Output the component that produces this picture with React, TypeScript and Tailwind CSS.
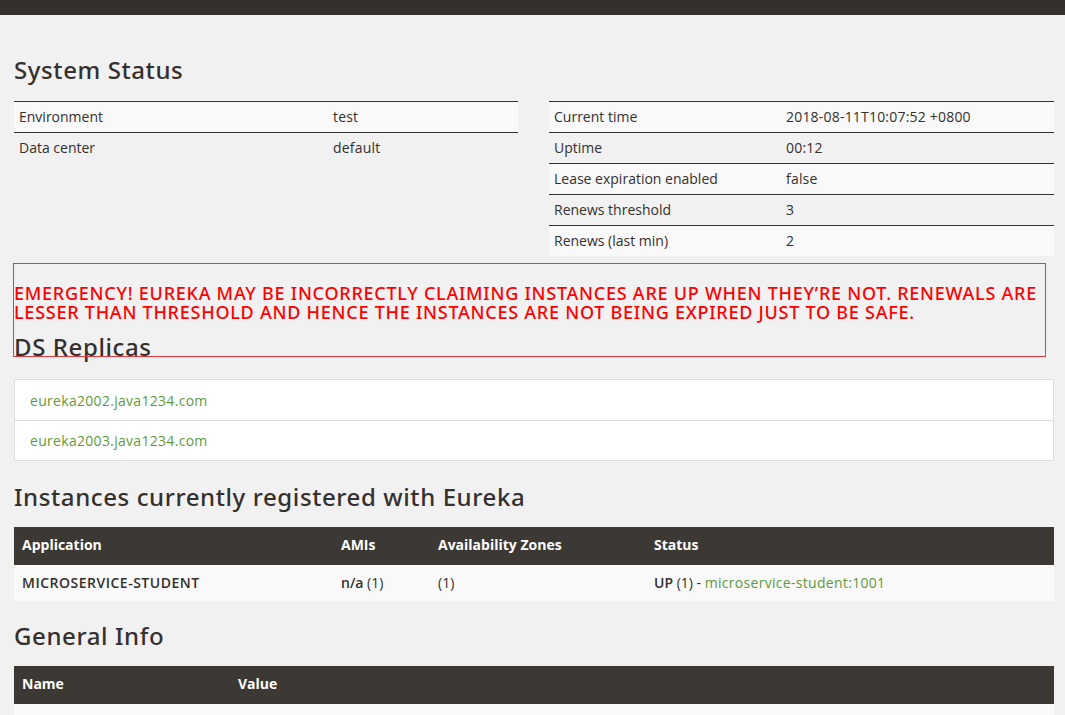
import React from "react";

const body = { fontFamily: '"Open Sans", "Noto Sans", Arial, sans-serif' };
const head = { fontFamily: '"Noto Sans", "Open Sans", Arial, sans-serif' };

function KV({ rows, col }: { rows: [string, string][]; col: string }) {
  return (
    <div className="flex flex-col">
      {rows.map(([k, v], i) => (
        <div
          key={k}
          className={`flex h-[31px] items-center border-t border-[#333333] pb-[2px] text-[14px] text-[#34302d] ${
            i % 2 === 0 ? "bg-[#f9f9f9]" : ""
          }`}
        >
          <div className={`${col} pl-[5px]`}>{k}</div>
          <div className="pl-[5px] tracking-[0.2px]">{v}</div>
        </div>
      ))}
    </div>
  );
}

export default function App() {
  return (
    <div className="min-h-[715px] bg-[#f1f1f1] text-[#34302d]" style={body}>
      <div className="h-[15px] bg-[#34302d]" />
      <div className="ml-[14px] w-[1040px]">
        <h1
          className="mt-[42px] text-[24px] leading-[26px] font-medium tracking-[0.6px] text-[#34302d]"
          style={head}
        >
          System Status
        </h1>
        <div className="mt-[18px] grid grid-cols-[504px_505px] gap-[31px]">
          <KV
            col="w-[314px]"
            rows={[
              ["Environment", "test"],
              ["Data center", "default"],
            ]}
          />
          <KV
            col="w-[232px]"
            rows={[
              ["Current time", "2018-08-11T10:07:52 +0800"],
              ["Uptime", "00:12"],
              ["Lease expiration enabled", "false"],
              ["Renews threshold", "3"],
              ["Renews (last min)", "2"],
            ]}
          />
        </div>

        <div className="relative -ml-[1px] mt-[7px] w-[1033px]">
          <div
            className="pl-[1px] pt-[21px] text-[18px] leading-[18.5px] font-medium uppercase tracking-[0.75px] text-[#ff0000]"
            style={head}
          >
            EMERGENCY! EUREKA MAY BE INCORRECTLY CLAIMING INSTANCES ARE UP WHEN THEY’RE NOT. RENEWALS ARE LESSER THAN
            THRESHOLD AND HENCE THE INSTANCES ARE NOT BEING EXPIRED JUST TO BE SAFE.
          </div>
          <h1
            className="mt-[13px] pl-[1px] text-[24px] leading-[26px] font-medium tracking-[0.6px] text-[#34302d]"
            style={head}
          >
            DS Replicas
          </h1>
          <div className="pointer-events-none absolute left-0 top-0 h-[94px] w-[1033px] border border-[#e0393e]" />
        </div>

        <div className="mt-[19px] border border-[#dddddd] bg-white">
          <div className="flex h-[40px] items-center pl-[15px] text-[14px] tracking-[0.3px] text-[#5f9a3d]">
            eureka2002.java1234.com
          </div>
          <div className="flex h-[40px] items-center border-t border-[#dddddd] pl-[15px] text-[14px] tracking-[0.3px] text-[#5f9a3d]">
            eureka2003.java1234.com
          </div>
        </div>

        <h1
          className="mt-[23px] text-[24px] leading-[26px] font-medium tracking-[0.6px] text-[#34302d]"
          style={head}
        >
          Instances currently registered with Eureka
        </h1>
        <div className="mt-[17px] text-[14px]">
          <div className="flex h-[38px] items-center bg-[#3c3834] pb-[3px] font-bold text-white">
            <div className="w-[319px] pl-[8px]">Application</div>
            <div className="w-[97px] pl-[8px]">AMIs</div>
            <div className="w-[216px] pl-[8px]">Availability Zones</div>
            <div className="pl-[8px]">Status</div>
          </div>
          <div className="flex h-[36px] items-center bg-[#f9f9f9] pb-[2px]">
            <div className="w-[319px] pl-[8px] font-semibold tracking-[0.5px]">MICROSERVICE-STUDENT</div>
            <div className="w-[97px] pl-[8px]">
              <span className="font-semibold">n/a</span> (1)
            </div>
            <div className="w-[216px] pl-[8px]">(1)</div>
            <div className="pl-[8px]">
              <span className="font-semibold">UP</span> (1) -{" "}
              <span className="tracking-[0.3px] text-[#5f9a3d]">microservice-student:1001</span>
            </div>
          </div>
        </div>

        <h1
          className="mt-[22px] text-[24px] leading-[26px] font-medium tracking-[0.6px] text-[#34302d]"
          style={head}
        >
          General Info
        </h1>
        <div className="mt-[17px] text-[14px]">
          <div className="flex h-[38px] items-center bg-[#3c3834] pb-[3px] font-bold text-white">
            <div className="w-[216px] pl-[8px]">Name</div>
            <div className="pl-[8px]">Value</div>
          </div>
          <div className="h-[36px] bg-[#f9f9f9]" />
        </div>
      </div>
    </div>
  );
}
